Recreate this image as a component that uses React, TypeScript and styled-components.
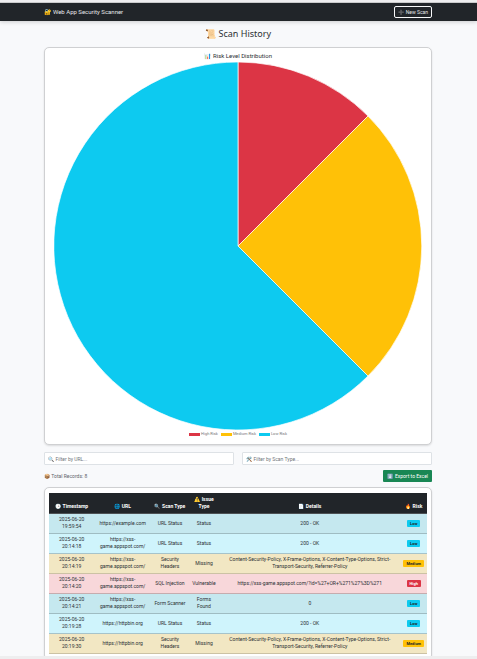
import React, { useState } from "react";
import styled, { createGlobalStyle } from "styled-components";

type Risk = "High" | "Medium" | "Low";

const GlobalStyle = createGlobalStyle`
  *, *::before, *::after { box-sizing: border-box; }
  body {
    margin: 0;
    background: #eeeeef;
    color: #2c3034;
    font-family: Roboto, "Noto Color Emoji", sans-serif;
    font-size: 5px;
    line-height: 7px;
  }
`;

const Page = styled.div`
  display: flex;
  flex-direction: column;
  height: 100vh;
  padding: 2px 0 3px;
`;

const Viewport = styled.div`
  flex: 1;
  min-height: 0;
  overflow: hidden;
  background: #f8f9fb;
  border-top: 1px solid #c9cacb;
`;

const Navbar = styled.nav`
  display: flex;
  align-items: center;
  justify-content: space-between;
  height: 18px;
  padding: 0 45px 0 44px;
  background: #212529;
  box-shadow: 0 1px 4px rgba(0, 0, 0, 0.18);
`;

const Brand = styled.a`
  color: #e4e6e8;
  font-size: 6px;
  line-height: 8px;
  text-decoration: none;
`;

const NewScan = styled.button`
  height: 12px;
  padding: 0 3px;
  border: 1px solid #f8f9fa;
  border-radius: 2px;
  background: transparent;
  color: #e4e6e8;
  font: inherit;
`;

const Main = styled.main`
  padding: 0 45px 0 44px;
`;

const Title = styled.h1`
  margin: 6px 0;
  font-family: "Noto Sans", "Noto Color Emoji", sans-serif;
  font-size: 9px;
  line-height: 14px;
  font-weight: 400;
  text-align: center;
`;

const Card = styled.section`
  border: 1px solid #cfd0d2;
  border-radius: 5px;
  background: #fff;
  box-shadow: 0 1px 2px rgba(0, 0, 0, 0.12);
`;

const ChartCard = styled(Card)`
  display: flex;
  flex-direction: column;
  padding: 4px 9px 6px;
`;

const ChartTitle = styled.h2`
  margin: 0 0 2px;
  font-size: 6px;
  line-height: 8px;
  font-weight: 400;
  text-align: center;
`;

const Pie = styled.svg`
  display: block;
  width: 100%;
`;

const Legend = styled.ul`
  display: flex;
  justify-content: center;
  gap: 3px;
  margin: 1px 0 0;
  padding: 0 0 1px;
  list-style: none;
  color: #777;
  font-size: 4px;
  line-height: 6px;
`;

const LegendItem = styled.li<{ $color: string }>`
  display: flex;
  align-items: center;
  gap: 1px;
  &::before {
    content: "";
    width: 11px;
    height: 3px;
    background: ${(p) => p.$color};
  }
`;

const Filters = styled.div`
  display: grid;
  grid-template-columns: 1fr 1fr;
  gap: 8px;
  margin-top: 7px;
`;

const Field = styled.input`
  min-width: 0;
  height: 13px;
  padding: 0 3px;
  border: 1px solid #dee2e6;
  border-radius: 1px;
  background: #fff;
  color: #212529;
  font: inherit;
  &::placeholder { color: #71767b; opacity: 1; }
`;

const Summary = styled.div`
  display: flex;
  align-items: center;
  justify-content: space-between;
  margin: 5px 0;
  color: #5f656b;
`;

const Export = styled.button`
  height: 12px;
  padding: 0 4px;
  border: 0;
  border-radius: 1px;
  background: #198754;
  color: #fff;
  font: inherit;
`;

const TableCard = styled(Card)`
  padding: 5px 4px;
`;

const Table = styled.table`
  width: 100%;
  table-layout: fixed;
  border-collapse: collapse;
  text-align: center;
`;

const Col = styled.col<{ $share: number }>`
  width: ${(p) => p.$share}%;
`;

const Th = styled.th`
  height: 20px;
  padding: 2px 2px 3px;
  background: #212529;
  color: #fff;
  border-bottom: 1px solid #4d5154;
  font-weight: 700;
  vertical-align: bottom;
`;

const tones = {
  lowOdd: ["#c5e8ef", "#9fbcc2"],
  low: ["#cff4fc", "#a6c3ca"],
  medium: ["#f2e7c3", "#ccc2a4"],
  high: ["#f8d7da", "#c6acae"],
};

const Row = styled.tr<{ $tone: keyof typeof tones }>`
  height: 20px;
  background: ${(p) => tones[p.$tone][0]};
  td { border-bottom: 1px solid ${(p) => tones[p.$tone][1]}; }
`;

const Td = styled.td`
  padding: 2px;
  vertical-align: middle;
`;

const colors: Record<Risk, string> = { High: "#dc3545", Medium: "#ffc107", Low: "#0dcaf0" };

const Badge = styled.span<{ $risk: Risk }>`
  display: inline-block;
  padding: 0 3px;
  border-radius: 1px;
  background: ${(p) => colors[p.$risk]};
  color: ${(p) => (p.$risk === "High" ? "#fff" : "#212529")};
  font-size: 4px;
  font-weight: 700;
  line-height: 7px;
`;

const headers = "Content-Security-Policy, X-Frame-Options, X-Content-Type-Options, Strict-Transport-Security, Referrer-Policy";

const records: { time: string; url: string; scan: string; issue: string; details: string; risk: Risk }[] = [
  { time: "2025-06-20 19:59:54", url: "https://example.com", scan: "URL Status", issue: "Status", details: "200 - OK", risk: "Low" },
  { time: "2025-06-20 20:14:18", url: "https://xss-game.appspot.com/", scan: "URL Status", issue: "Status", details: "200 - OK", risk: "Low" },
  { time: "2025-06-20 20:14:19", url: "https://xss-game.appspot.com/", scan: "Security Headers", issue: "Missing", details: headers, risk: "Medium" },
  { time: "2025-06-20 20:14:20", url: "https://xss-game.appspot.com/", scan: "SQL Injection", issue: "Vulnerable", details: "https://xss-game.appspot.com/?id=%27+OR+%271%27%3D%271", risk: "High" },
  { time: "2025-06-20 20:14:21", url: "https://xss-game.appspot.com/", scan: "Form Scanner", issue: "Forms Found", details: "0", risk: "Low" },
  { time: "2025-06-20 20:19:28", url: "https://httpbin.org", scan: "URL Status", issue: "Status", details: "200 - OK", risk: "Low" },
  { time: "2025-06-20 20:19:30", url: "https://httpbin.org", scan: "Security Headers", issue: "Missing", details: headers, risk: "Medium" },
];

export default function App() {
  const [url, setUrl] = useState("");
  const [scan, setScan] = useState("");
  return (
    <>
      <GlobalStyle />
      <Page>
        <Viewport>
          <Navbar>
            <Brand href="#">🔐 Web App Security Scanner</Brand>
            <NewScan>➕ New Scan</NewScan>
          </Navbar>
          <Main>
            <Title>📜 Scan History</Title>
            <ChartCard>
              <ChartTitle>📊 Risk Level Distribution</ChartTitle>
              <Pie viewBox="-184 -184 368 368" role="img" aria-label="Risk level distribution">
                <g stroke="#fff" strokeOpacity="0.7" strokeWidth="1" strokeLinejoin="round">
                  <path d="M0 0V-184A184 184 0 0 1 130 -130Z" fill={colors.High} />
                  <path d="M0 0L130 -130A184 184 0 0 1 130 130Z" fill={colors.Medium} />
                  <path d="M0 0L130 130A184 184 0 1 1 0 -184Z" fill={colors.Low} />
                </g>
              </Pie>
              <Legend>
                <LegendItem $color={colors.High}>High Risk</LegendItem>
                <LegendItem $color={colors.Medium}>Medium Risk</LegendItem>
                <LegendItem $color={colors.Low}>Low Risk</LegendItem>
              </Legend>
            </ChartCard>
            <Filters>
              <Field aria-label="Filter by URL" placeholder="🔍 Filter by URL..." value={url} onChange={(e) => setUrl(e.target.value)} />
              <Field aria-label="Filter by scan type" placeholder="🛠️ Filter by Scan Type..." value={scan} onChange={(e) => setScan(e.target.value)} />
            </Filters>
            <Summary>
              <span>📦 Total Records: 8</span>
              <Export>⬇️ Export to Excel</Export>
            </Summary>
            <TableCard>
              <Table>
                <colgroup>
                  <Col $share={12} />
                  <Col $share={15} />
                  <Col $share={10} />
                  <Col $share={8} />
                  <Col $share={48} />
                  <Col $share={7} />
                </colgroup>
                <thead>
                  <tr>
                    <Th scope="col">🕒 Timestamp</Th>
                    <Th scope="col">🌐 URL</Th>
                    <Th scope="col">🔍 Scan Type</Th>
                    <Th scope="col">⚠️ Issue Type</Th>
                    <Th scope="col">📄 Details</Th>
                    <Th scope="col">🔥 Risk</Th>
                  </tr>
                </thead>
                <tbody>
                  {records
                    .filter((r) => r.url.includes(url) && r.scan.toLowerCase().includes(scan.toLowerCase()))
                    .map((r, i) => (
                      <Row key={r.time} $tone={r.risk === "High" ? "high" : r.risk === "Medium" ? "medium" : i % 2 ? "low" : "lowOdd"}>
                        <Td>{r.time}</Td>
                        <Td>{r.url}</Td>
                        <Td>{r.scan}</Td>
                        <Td>{r.issue}</Td>
                        <Td>{r.details}</Td>
                        <Td><Badge $risk={r.risk}>{r.risk}</Badge></Td>
                      </Row>
                    ))}
                </tbody>
              </Table>
            </TableCard>
          </Main>
        </Viewport>
      </Page>
    </>
  );
}
